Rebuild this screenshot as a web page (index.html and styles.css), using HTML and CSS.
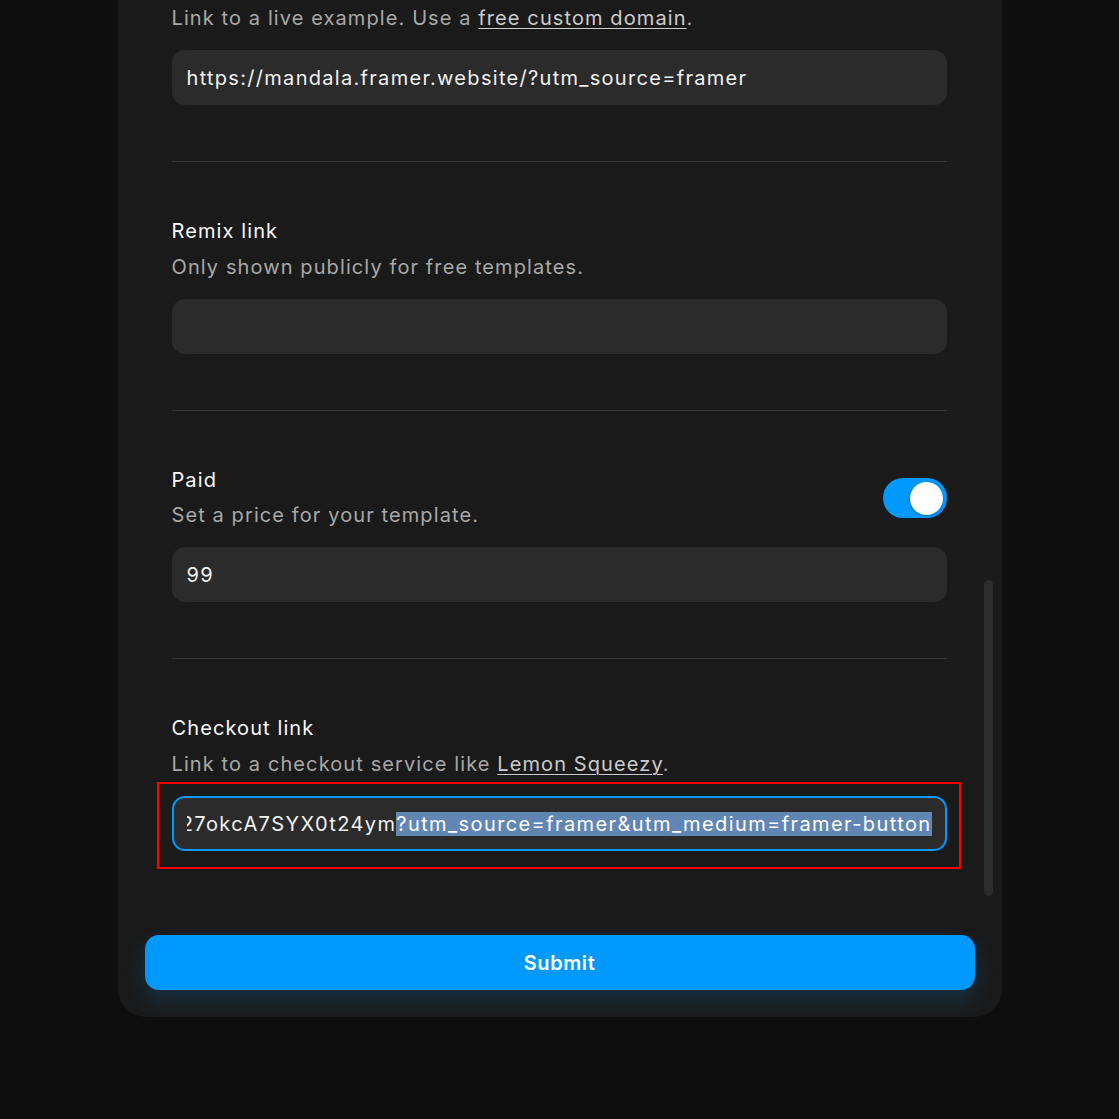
FILE: index.html
```html
<!DOCTYPE html>
<html lang="en">
<head>
<meta charset="utf-8">
<title>Template settings</title>
<link rel="stylesheet" href="styles.css">
</head>
<body>
<div class="page">
  <div class="card">
    <div class="scroll">
      <section class="section first">
        <p class="desc">Link to a live example. Use a <a class="link" href="#">free custom domain</a>.</p>
        <div class="field">https://mandala.framer.website/?utm_source=framer</div>
      </section>
      <hr class="divider">
      <section class="section">
        <div class="label">Remix link</div>
        <p class="desc">Only shown publicly for free templates.</p>
        <div class="field"></div>
      </section>
      <hr class="divider">
      <section class="section">
        <div class="row">
          <div class="texts">
            <div class="label">Paid</div>
            <p class="desc tight">Set a price for your template.</p>
          </div>
          <div class="toggle"><span class="knob"></span></div>
        </div>
        <div class="field">99</div>
      </section>
      <hr class="divider">
      <section class="section">
        <div class="label">Checkout link</div>
        <p class="desc">Link to a checkout service like <a class="link" href="#">Lemon Squeezy</a>.</p>
        <div class="field-wrap">
          <div class="field focused"><div class="clip"><span class="value">https://mandala.lemonsqueezy.com/checkout/buy/9f1c2e82?code=Hxm27okcA7SYX0t24ym<span class="sel">?utm_source=framer&amp;utm_medium=framer-button</span></span></div></div>
          <div class="annot"></div>
        </div>
      </section>
    </div>
    <div class="scrollbar"></div>
    <button class="submit" type="button">Submit</button>
  </div>
</div>
</body>
</html>
```

FILE: styles.css
```css
* { box-sizing: border-box; }
html, body { margin: 0; padding: 0; }
body {
  background: #0e0e0e;
  font-family: Inter, "Noto Sans", "Liberation Sans", sans-serif;
  color: #efefef;
  height: 1119px;
  overflow: hidden;
}
.page {
  display: flex;
  justify-content: center;
}
.card {
  position: relative;
  width: 884px;
  background: #1a1a1a;
  border-radius: 0 0 28px 28px;
  padding: 0 27px 27px;
}
.scroll {
  padding: 0 28px 56px 27px;
}
.section {
  padding-top: 55px;
  padding-bottom: 56px;
}
.section.first { padding-top: 4px; }
.section:last-child { padding-bottom: 0; }
.label {
  font-size: 20px;
  line-height: 28px;
  font-weight: 400;
  letter-spacing: 1.1px;
  color: #fafafa;
}
.desc {
  margin: 8px 0 0;
  font-size: 20px;
  line-height: 28px;
  letter-spacing: 1.1px;
  color: #a8a8a8;
}
.desc.tight { margin-top: 7px; }
.section.first .desc { margin-top: 0; }
.link {
  color: #cccccc;
  text-decoration: underline;
  text-underline-offset: 3px;
  text-decoration-thickness: 1px;
}
.field {
  margin-top: 18px;
  height: 55px;
  border-radius: 13px;
  background: #2b2b2b;
  padding: 0 15px;
  display: flex;
  align-items: center;
  font-size: 20px;
  letter-spacing: 1.3px;
  color: #f2f2f2;
  white-space: nowrap;
  overflow: hidden;
}
.divider {
  margin: 0;
  border: 0;
  height: 1px;
  background: #363636;
}
.row {
  display: flex;
  align-items: center;
  justify-content: space-between;
}
.toggle {
  width: 64px;
  height: 40px;
  border-radius: 20px;
  background: #0099ff;
  position: relative;
  flex: none;
}
.knob {
  position: absolute;
  top: 4px;
  right: 4px;
  width: 33px;
  height: 33px;
  border-radius: 50%;
  background: #ffffff;
  box-shadow: 0 1px 3px rgba(0,0,0,0.25);
}
.field-wrap {
  position: relative;
}
.field.focused {
  border: 2px solid #0099ff;
  padding: 0 13px;
  letter-spacing: 1.4px;
}
.clip {
  flex: 1;
  min-width: 0;
  display: flex;
  justify-content: flex-end;
  overflow: hidden;
}
.value {
  flex: none;
}
.sel {
  background: #6286b3;
  color: #ffffff;
  padding: 2px 0 3px;
}
.annot {
  position: absolute;
  left: -15px;
  right: -14px;
  top: -14px;
  bottom: -18px;
  border: 2px solid #ff0000;
  pointer-events: none;
}
.scrollbar {
  position: absolute;
  right: 9px;
  top: 580px;
  width: 9px;
  height: 316px;
  border-radius: 5px;
  background: #2d2d2d;
}
.submit {
  display: block;
  width: 100%;
  height: 55px;
  margin-top: 28px;
  border: 0;
  border-radius: 14px;
  background: #0099ff;
  color: #ffffff;
  font-family: Inter, "Noto Sans", "Liberation Sans", sans-serif;
  font-size: 20px;
  font-weight: 600;
  letter-spacing: 0.6px;
  box-shadow: 0 10px 22px rgba(0, 153, 255, 0.18);
  cursor: pointer;
}
```
